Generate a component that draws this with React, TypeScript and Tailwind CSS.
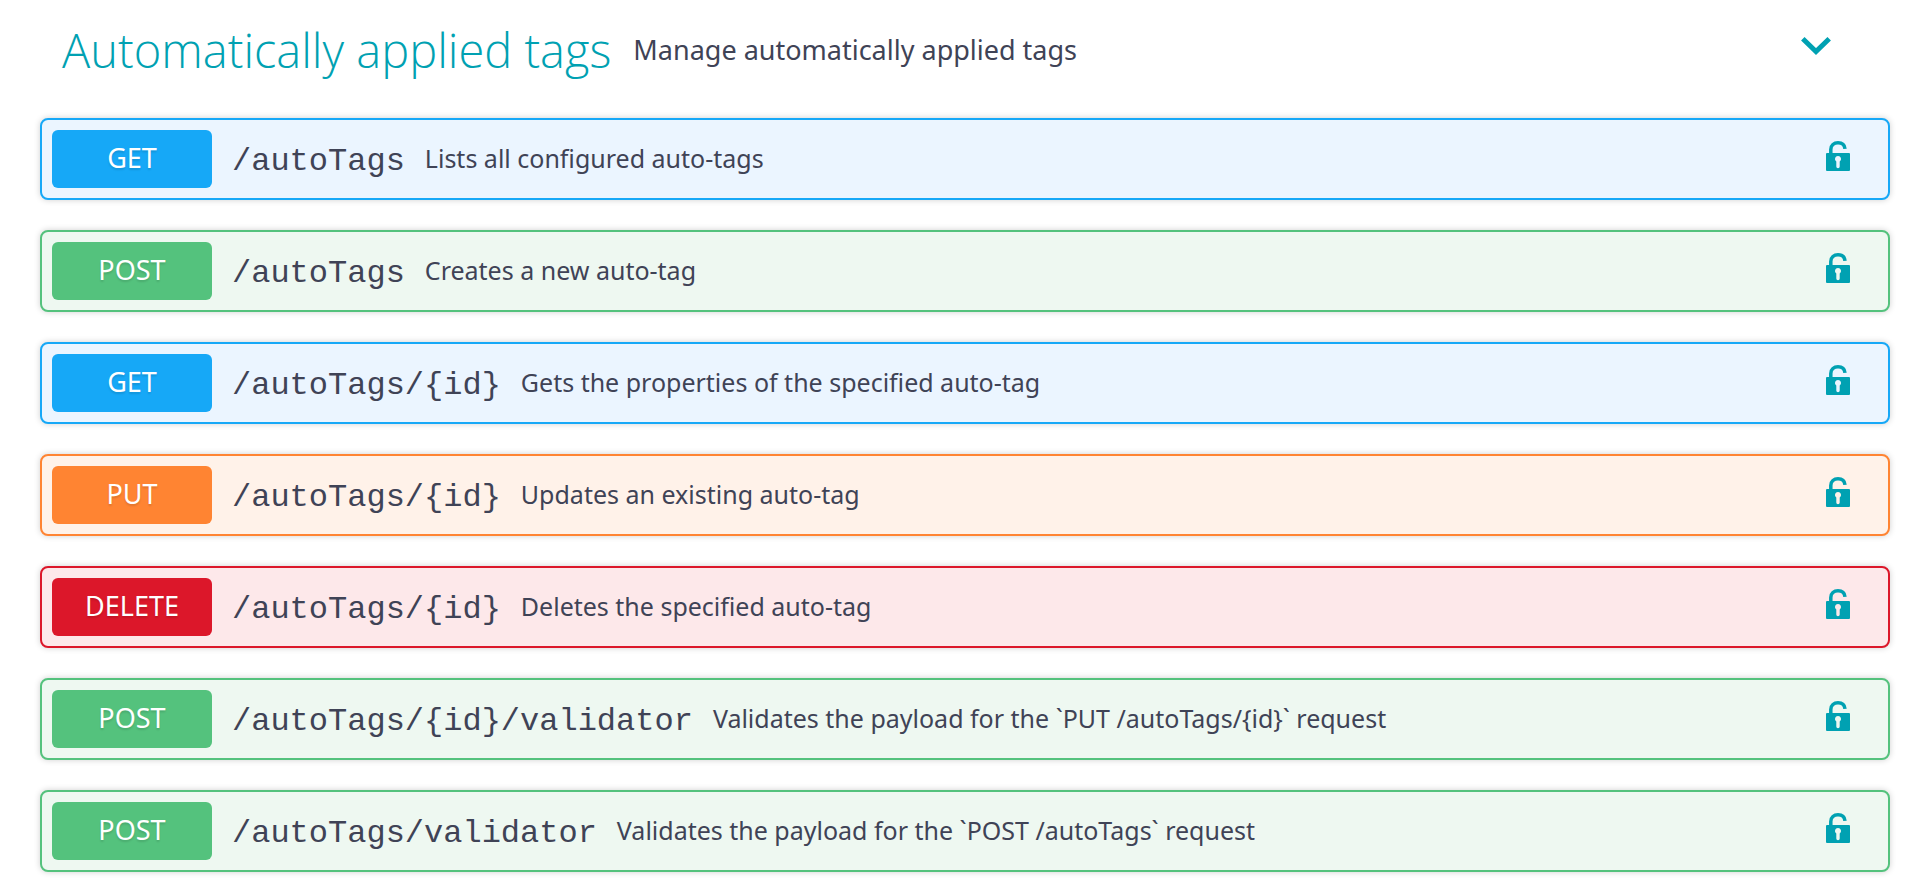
type Method = "GET" | "POST" | "PUT" | "DELETE";

interface Operation {
  method: Method;
  path: string;
  summary: string;
}

const operations: Operation[] = [
  { method: "GET", path: "/autoTags", summary: "Lists all configured auto-tags" },
  { method: "POST", path: "/autoTags", summary: "Creates a new auto-tag" },
  { method: "GET", path: "/autoTags/{id}", summary: "Gets the properties of the specified auto-tag" },
  { method: "PUT", path: "/autoTags/{id}", summary: "Updates an existing auto-tag" },
  { method: "DELETE", path: "/autoTags/{id}", summary: "Deletes the specified auto-tag" },
  {
    method: "POST",
    path: "/autoTags/{id}/validator",
    summary: "Validates the payload for the `PUT /autoTags/{id}` request",
  },
  {
    method: "POST",
    path: "/autoTags/validator",
    summary: "Validates the payload for the `POST /autoTags` request",
  },
];

const rowStyles: Record<Method, string> = {
  GET: "border-[#16a8f7] bg-[#ebf5ff]",
  POST: "border-[#54c27d] bg-[#eef8f1]",
  PUT: "border-[#ff8432] bg-[#fff2e9]",
  DELETE: "border-[#dc172a] bg-[#fde8ea]",
};

const badgeStyles: Record<Method, string> = {
  GET: "bg-[#16a8f7]",
  POST: "bg-[#54c27d]",
  PUT: "bg-[#ff8432]",
  DELETE: "bg-[#dc172a]",
};

function ChevronIcon() {
  return (
    <svg width="30" height="18" viewBox="0 0 30 18" fill="none" aria-hidden="true">
      <path d="M1.8 1.8 15 14.5 28.2 1.8" stroke="currentColor" strokeWidth="5" />
    </svg>
  );
}

function UnlockedIcon() {
  return (
    <svg width="24" height="30" viewBox="0 0 24 30" fill="none" aria-hidden="true">
      <path
        d="M4.8 13V8.6C4.8 4.2 8 1.8 12 1.8C15.6 1.8 18.6 3.8 19 7.8"
        stroke="currentColor"
        strokeWidth="3.5"
      />
      <path
        fill="currentColor"
        fillRule="evenodd"
        d="M1 12H23a1 1 0 0 1 1 1V29a1 1 0 0 1-1 1H1a1 1 0 0 1-1-1V13a1 1 0 0 1 1-1ZM12 15a3 3 0 0 0-1.7 5.5V25.5a1.7 1.7 0 0 0 3.4 0V20.5A3 3 0 0 0 12 15Z"
      />
    </svg>
  );
}

function OperationRow({ method, path, summary }: Operation) {
  return (
    <li
      className={`flex items-center rounded-lg border-2 p-2.5 pr-[38px] shadow-[0_0_6px_rgba(0,0,0,0.19)] ${rowStyles[method]}`}
    >
      <span
        className={`flex h-[58px] w-40 shrink-0 items-center justify-center rounded-md pb-0.5 text-[27px] leading-9 text-white [text-shadow:0_2px_2px_rgba(0,0,0,0.12)] ${badgeStyles[method]}`}
      >
        {method}
      </span>
      <a
        href={`#${method}${path}`}
        className="ml-5 pt-1.5 font-['Liberation_Mono',monospace] text-[32px] leading-9"
      >
        {path}
      </a>
      <span className="ml-5 flex-1 pb-0.5 text-[25px] leading-9">{summary}</span>
      <button type="button" aria-label="Authorize" className="cursor-pointer pb-1.5 text-[#00a1b2]">
        <UnlockedIcon />
      </button>
    </li>
  );
}

export default function App() {
  return (
    <main className="bg-white px-10 pb-[22px] font-['Noto_Sans',sans-serif] text-[#3f4356]">
      <header className="flex h-[100px] items-center pr-[59px] pl-[22px]">
        <h1 className="font-['Open_Sans',sans-serif] text-[47px] leading-[60px] font-light text-[#00a1b2]">
          Automatically applied tags
        </h1>
        <p className="ml-[22px] flex-1 text-[27px] leading-9">Manage automatically applied tags</p>
        <button type="button" aria-label="Collapse section" className="cursor-pointer pb-2 text-[#00a1b2]">
          <ChevronIcon />
        </button>
      </header>
      <ul className="flex flex-col gap-[30px] pt-[18px]">
        {operations.map((operation) => (
          <OperationRow key={operation.method + operation.path} {...operation} />
        ))}
      </ul>
    </main>
  );
}
